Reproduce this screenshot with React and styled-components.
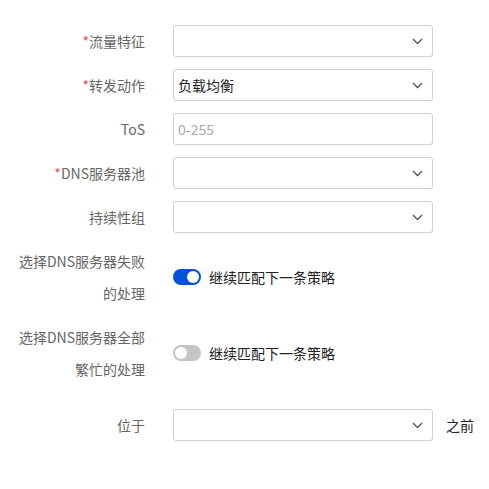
import React from 'react'
import styled, { createGlobalStyle } from 'styled-components'

const GlobalStyle = createGlobalStyle`
  body {
    margin: 0;
    background: #fff;
    font-family: "Noto Sans CJK SC", "Noto Sans", sans-serif;
  }
`

function Chevron() {
    return (
        <svg width="11" height="7" viewBox="0 0 11 7">
            <path d="M1 1l4.5 4.5L10 1" fill="none" stroke="#4a5566" strokeWidth="1.3" />
        </svg>
    )
}

function App() {
    return (
        <Form>
            <GlobalStyle />
            <Row>
                <Label><Req>*</Req>流量特征</Label>
                <Select><span /><Chevron /></Select>
            </Row>
            <Row>
                <Label><Req>*</Req>转发动作</Label>
                <Select><Value>负载均衡</Value><Chevron /></Select>
            </Row>
            <Row>
                <Label>ToS</Label>
                <Input placeholder="0-255" />
            </Row>
            <Row>
                <Label><Req>*</Req>DNS服务器池</Label>
                <Select><span /><Chevron /></Select>
            </Row>
            <Row>
                <Label>持续性组</Label>
                <Select><span /><Chevron /></Select>
            </Row>
            <Row>
                <Label>选择DNS服务器失败的处理</Label>
                <Toggle on>
                    <Knob />
                </Toggle>
                <ToggleText>继续匹配下一条策略</ToggleText>
            </Row>
            <Row>
                <Label>选择DNS服务器全部繁忙的处理</Label>
                <Toggle>
                    <Knob />
                </Toggle>
                <ToggleText>继续匹配下一条策略</ToggleText>
            </Row>
            <Row spaced>
                <Label>位于</Label>
                <Select><span /><Chevron /></Select>
                <Suffix>之前</Suffix>
            </Row>
        </Form>
    )
}

export default App

const Form = styled.div`
    padding-top: 25px;
    display: flex;
    flex-direction: column;
    gap: 12px;
`
const Row = styled.div`
    display: flex;
    align-items: center;
    margin-top: ${props => props.spaced ? '12px' : '0'};
`
const Label = styled.div`
    width: 130px;
    margin-left: 15px;
    margin-right: 28px;
    text-align: right;
    font-size: 14px;
    line-height: 32px;
    color: #666;
    flex-shrink: 0;
`
const Req = styled.span`
    color: #e34d59;
`
const Select = styled.div`
    box-sizing: border-box;
    width: 260px;
    height: 32px;
    border: 1px solid #d0d0d0;
    border-radius: 3px;
    display: flex;
    align-items: center;
    justify-content: space-between;
    padding: 0 9px 0 4px;
`
const Value = styled.span`
    font-size: 14px;
    color: #222;
`
const Input = styled.input`
    box-sizing: border-box;
    width: 260px;
    height: 32px;
    border: 1px solid #d0d0d0;
    border-radius: 3px;
    padding: 0 4px;
    font-family: inherit;
    font-size: 14px;
    outline: none;
    &::placeholder {
        color: #aaa;
    }
`
const Toggle = styled.div`
    width: 28px;
    height: 16px;
    border-radius: 8px;
    background: ${props => props.on ? '#0052d9' : '#c5c5c5'};
    display: flex;
    align-items: center;
    justify-content: ${props => props.on ? 'flex-end' : 'flex-start'};
    padding: 0 2px;
    box-sizing: border-box;
    flex-shrink: 0;
`
const Knob = styled.div`
    width: 12px;
    height: 12px;
    border-radius: 50%;
    background: #fff;
`
const ToggleText = styled.span`
    margin-left: 8px;
    font-size: 14px;
    color: #222;
`
const Suffix = styled.span`
    margin-left: 13px;
    font-size: 14px;
    color: #222;
`
